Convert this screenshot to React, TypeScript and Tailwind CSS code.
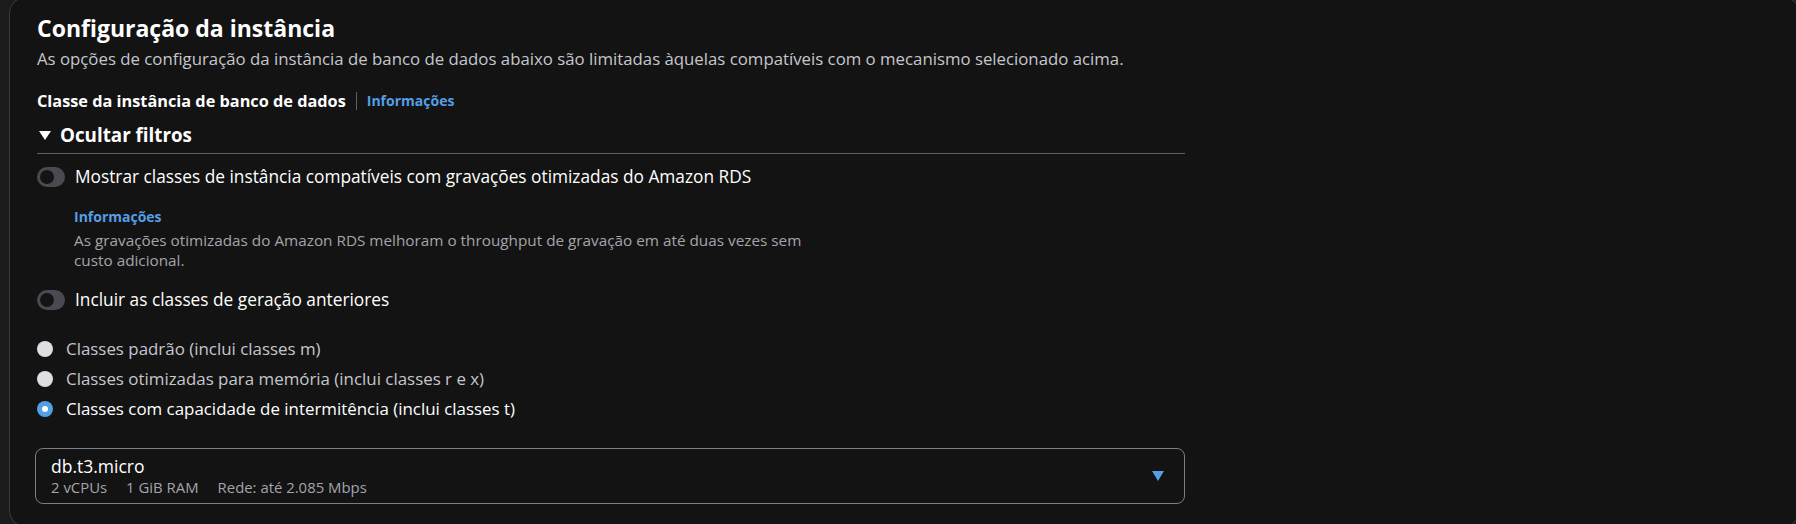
const font = { fontFamily: '"Open Sans", "Noto Sans", sans-serif' }

const Toggle = () => (
    <span className="relative inline-flex h-[20px] w-[28px] shrink-0 items-center rounded-full bg-[#4a4a52]">
        <span className="ml-[1px] h-[18px] w-[18px] rounded-full border-[2px] border-[#4a4a52] bg-[#141414]" />
    </span>
)

const Radio = ({ checked }: { checked?: boolean }) =>
    checked ? (
        <span className="flex h-[16px] w-[16px] shrink-0 items-center justify-center rounded-full bg-[#539fe5]">
            <span className="h-[6px] w-[6px] rounded-full bg-white" />
        </span>
    ) : (
        <span className="h-[16px] w-[16px] shrink-0 rounded-full bg-[#dedee3]" />
    )

const radios = [
    { label: 'Classes padrão (inclui classes m)', checked: false },
    { label: 'Classes otimizadas para memória (inclui classes r e x)', checked: false },
    { label: 'Classes com capacidade de intermitência (inclui classes t)', checked: true },
]

export default function App() {
    return (
        <div className="h-[524px] w-[1796px] overflow-hidden bg-[#1b1b1b]" style={font}>
            <div className="-mt-[3px] ml-[9px] h-[530px] w-[1791px] rounded-[16px] border border-[#3c3c3c] bg-[#131313] pl-[27px] pt-[15px]">
                <h2 className="text-[23px] font-bold leading-[30px] text-white">Configuração da instância</h2>
                <p className="mt-[5px] text-[16.8px] leading-[22px] text-[#c6c6cd]">
                    As opções de configuração da instância de banco de dados abaixo são limitadas àquelas compatíveis com o mecanismo selecionado acima.
                </p>

                <div className="mt-[20px] flex items-center">
                    <span className="text-[16.3px] font-bold leading-[22px] text-white">Classe da instância de banco de dados</span>
                    <span className="mx-[10px] h-[18px] w-px bg-[#5f5f66]" />
                    <span className="text-[14px] font-bold leading-[22px] text-[#539fe5]">Informações</span>
                </div>

                <div className="mt-[11px] w-[1148px] border-b border-[#5f5f66] pb-[6px]">
                    <div className="flex items-center">
                        <svg width="14" height="14" viewBox="0 0 14 14" className="ml-[1px] mr-[8px]">
                            <path d="M1 3h12L7 12z" fill="#ffffff" />
                        </svg>
                        <span className="text-[18.8px] font-bold leading-[24px] text-white">Ocultar filtros</span>
                    </div>
                </div>

                <div className="mt-[12px] flex items-center gap-[10px]">
                    <Toggle />
                    <span className="text-[17.3px] leading-[22px] text-white">
                        Mostrar classes de instância compatíveis com gravações otimizadas do Amazon RDS
                    </span>
                </div>
                <div className="ml-[37px] mt-[19px] w-[745px]">
                    <div className="text-[14px] font-bold leading-[20px] text-[#539fe5]">Informações</div>
                    <p className="mt-[3px] text-[15.3px] leading-[20px] text-[#a4a4ad]">
                        As gravações otimizadas do Amazon RDS melhoram o throughput de gravação em até duas vezes sem custo adicional.
                    </p>
                </div>

                <div className="mt-[19px] flex items-center gap-[10px]">
                    <Toggle />
                    <span className="text-[17.3px] leading-[22px] text-white">Incluir as classes de geração anteriores</span>
                </div>

                <div className="mt-[27px] flex flex-col gap-[8px]">
                    {radios.map((r) => (
                        <label key={r.label} className="flex items-center gap-[13px]">
                            <Radio checked={r.checked} />
                            <span className={`text-[16.9px] leading-[22px] ${r.checked ? 'text-white' : 'text-[#c6c6cd]'}`}>
                                {r.label}
                            </span>
                        </label>
                    ))}
                </div>

                <div className="-ml-[2px] mt-[28px] flex h-[56px] w-[1150px] items-center rounded-[8px] border border-[#7d7d85] pl-[15px] pr-[20px]">
                    <div className="flex-1">
                        <div className="text-[17.5px] leading-[22px] text-white">db.t3.micro</div>
                        <div className="flex gap-[19px] text-[14.9px] leading-[20px] text-[#a4a4ad]">
                            <span>2 vCPUs</span>
                            <span>1 GiB RAM</span>
                            <span>Rede: até 2.085 Mbps</span>
                        </div>
                    </div>
                    <svg width="12" height="12" viewBox="0 0 12 12">
                        <path d="M0 1h12L6 11z" fill="#539fe5" />
                    </svg>
                </div>
            </div>
        </div>
    )
}
